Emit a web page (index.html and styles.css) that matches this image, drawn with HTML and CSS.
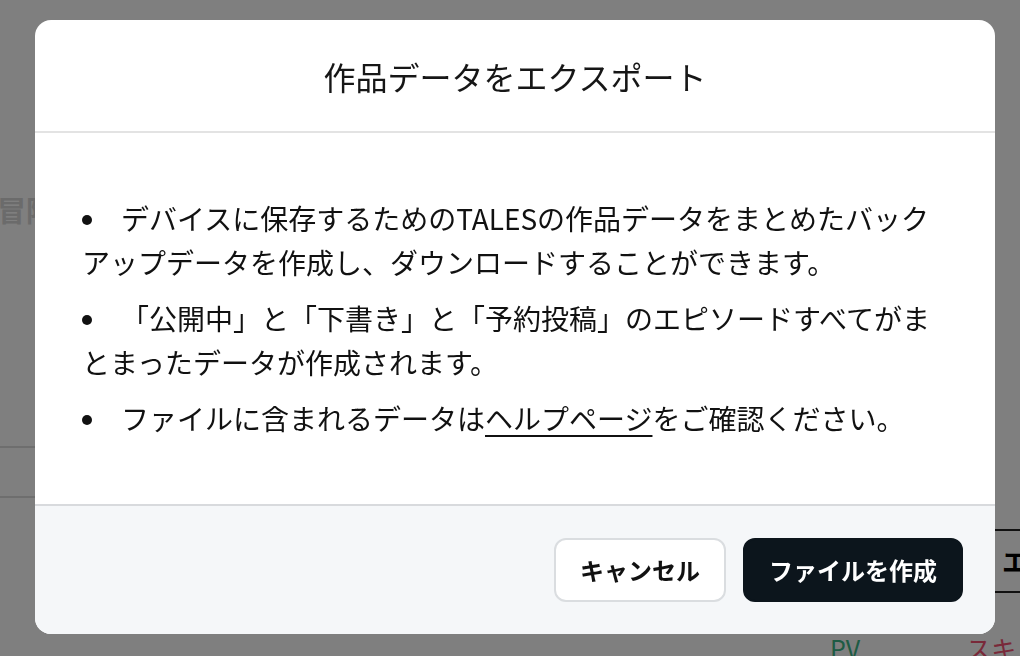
FILE: index.html
```html
<!DOCTYPE html>
<html lang="ja">
<head>
<meta charset="utf-8">
<title>作品データをエクスポート</title>
<link rel="stylesheet" href="styles.css">
</head>
<body>
<div class="page">
  <div class="page-left">
    <div class="page-title">冒険</div>
    <div class="rows">
      <div class="row"></div>
    </div>
  </div>
  <div class="page-right">
    <div class="edit-btn">エピソード</div>
    <div class="stats">
      <span class="stat-pv">PV</span>
      <span class="stat-suki">スキ</span>
    </div>
  </div>
</div>

<div class="overlay">
  <div class="modal" role="dialog">
    <div class="modal-header">
      <h1 class="modal-title">作品データをエクスポート</h1>
    </div>
    <div class="modal-body">
      <ul class="notes">
        <li>デバイスに保存するためのTALESの作品データをまとめたバックアップデータを作成し、ダウンロードすることができます。</li>
        <li>「公開中」と「下書き」と「予約投稿」のエピソードすべてがまとまったデータが作成されます。</li>
        <li>ファイルに含まれるデータは<a class="help-link" href="#">ヘルプページ</a>をご確認ください。</li>
      </ul>
    </div>
    <div class="modal-footer">
      <button class="btn btn-cancel" type="button">キャンセル</button>
      <button class="btn btn-primary" type="button">ファイルを作成</button>
    </div>
  </div>
</div>
</body>
</html>
```

FILE: styles.css
```css
* {
  box-sizing: border-box;
}

html, body {
  margin: 0;
  padding: 0;
}

body {
  width: 1020px;
  height: 656px;
  overflow: hidden;
  font-family: "Noto Sans CJK JP", "Noto Sans", sans-serif;
  color: #111;
  background: #fff;
}

/* ---------- page behind the dialog ---------- */
.page {
  display: flex;
  justify-content: space-between;
  height: 656px;
  overflow: hidden;
  background: #fff;
}

.page-left {
  width: 200px;
  padding-top: 189px;
}

.page-title {
  margin-left: -3px;
  font-size: 29px;
  line-height: 40px;
  color: #d6d6d6;
  font-weight: 700;
  white-space: nowrap;
}

.rows {
  margin-top: 217px;
  border-top: 2px solid #dcdcdc;
  border-bottom: 2px solid #dcdcdc;
}

.row {
  height: 48px;
}

.page-right {
  width: 260px;
  flex-shrink: 0;
  padding-top: 529px;
  overflow: hidden;
}

.edit-btn {
  width: 300px;
  height: 64px;
  margin-left: 200px;
  padding-left: 40px;
  border: 2px solid #222;
  border-radius: 12px;
  font-size: 26px;
  font-weight: 700;
  line-height: 60px;
  color: #000;
  white-space: nowrap;
}

.stats {
  display: flex;
  gap: 106px;
  margin-top: 40px;
  padding-left: 70px;
  font-size: 25px;
  line-height: 30px;
}

.stat-pv {
  color: #3cb689;
}

.stat-suki {
  color: #f25272;
}

/* ---------- overlay + dialog ---------- */
.overlay {
  position: fixed;
  inset: 0;
  background: rgba(0, 0, 0, 0.5);
  display: flex;
  align-items: flex-start;
  padding: 20px 0 0 35px;
}

.modal {
  width: 960px;
  background: #fff;
  border-radius: 16px;
  overflow: hidden;
  display: flex;
  flex-direction: column;
}

.modal-header {
  height: 113px;
  border-bottom: 2px solid #e3e3e3;
  display: flex;
  align-items: center;
  justify-content: center;
}

.modal-title {
  margin: 0;
  font-size: 32px;
  font-weight: 400;
  line-height: 44px;
  color: #161616;
}

.modal-body {
  padding: 63px 50px 64px 47px;
}

.notes {
  list-style: none;
  margin: 0;
  padding: 0;
  font-size: 28px;
  line-height: 44px;
  color: #111;
}

.notes li + li {
  margin-top: 12px;
}

.notes li::before {
  content: "";
  display: inline-block;
  width: 10px;
  height: 10px;
  margin: 0 29px 5px 0;
  border-radius: 50%;
  background: #111;
  vertical-align: baseline;
}

.help-link {
  color: #111;
  text-decoration: underline;
  text-decoration-thickness: 2px;
  text-underline-offset: 5px;
}

.modal-footer {
  display: flex;
  justify-content: flex-end;
  gap: 17px;
  padding: 32px 32px 32px;
  background: #f5f7f9;
  border-top: 2px solid #d8dadd;
}

.btn {
  height: 64px;
  padding: 0 24px;
  border-radius: 12px;
  font-family: "Noto Sans CJK JP", "Noto Sans", sans-serif;
  font-size: 24px;
  font-weight: 700;
  line-height: 1;
  cursor: pointer;
}

.btn-cancel {
  background: #fff;
  color: #111;
  border: 2px solid #dadde0;
}

.btn-primary {
  background: #0c151c;
  color: #fff;
  border: 2px solid #0c151c;
}
```
